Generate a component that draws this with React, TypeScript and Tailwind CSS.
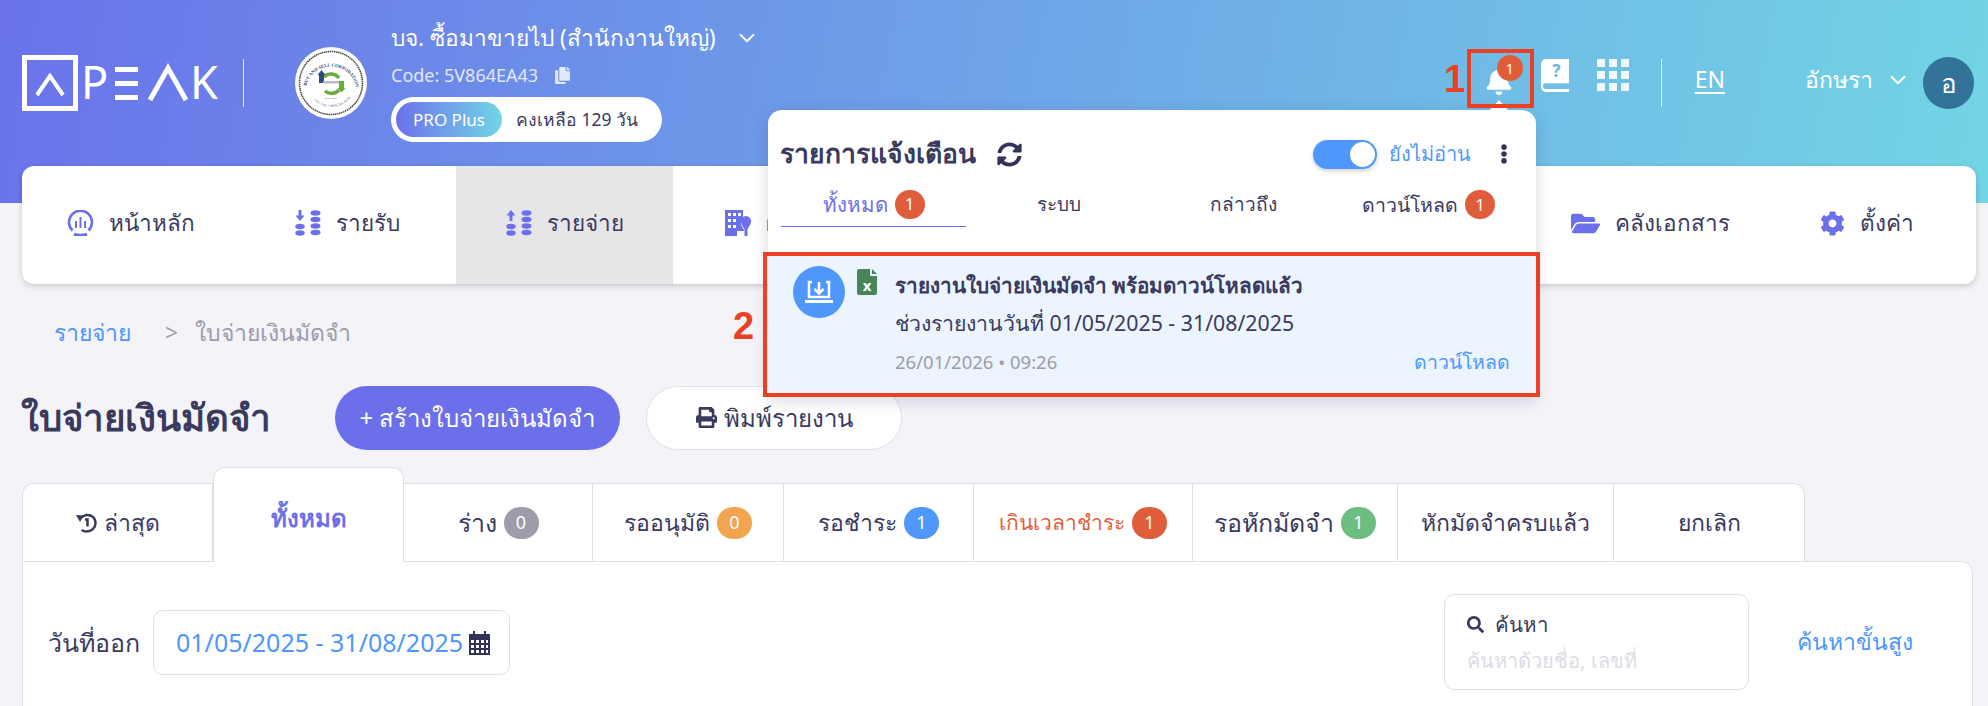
import React from 'react';
import { FaBell, FaCog, FaCopy, FaEllipsisV, FaFolderOpen, FaPrint, FaSearch, FaSyncAlt } from 'react-icons/fa';
import { ChevronDown } from 'lucide-react';

const PeakLogo = () => (
  <svg width="197" height="56" viewBox="0 0 197 56" aria-label="PEAK" className="overflow-visible">
    <rect x="2.500" y="2.500" width="51" height="51" fill="none" stroke="#fff" strokeWidth="5" />
    <polyline points="15,40 28,21 41,40" fill="none" stroke="#fff" strokeWidth="4" />
    <text x="59" y="44" fill="#fff" fontSize="45" fontFamily="Noto Sans, sans-serif">P</text>
    <rect x="93" y="12" width="23" height="5" fill="#fff" />
    <rect x="93" y="26" width="23" height="5" fill="#fff" />
    <rect x="93" y="40" width="23" height="5" fill="#fff" />
    <polyline points="128,45 146,13 164,45" fill="none" stroke="#fff" strokeWidth="5" />
    <text x="168" y="44" fill="#fff" fontSize="45" fontFamily="Noto Sans, sans-serif">K</text>
  </svg>
);

const CompanyLogo = () => (
  <svg width="72" height="72" viewBox="0 0 72 72">
    <circle cx="36" cy="36" r="36" fill="#fff" />
    <circle cx="36" cy="36" r="31.500" fill="#fff" stroke="#444" strokeWidth="1.500" strokeDasharray="1.500 0.600" />
    <defs>
      <path id="sealTop" d="M11 40a25.500 25.500 0 0 1 50 0" />
      <path id="sealBottom" d="M14 47a25 25 0 0 0 44 0" />
    </defs>
    <text fontSize="4.600" fontWeight="700" fill="#2c4a80" fontFamily="Liberation Serif, serif">
      <textPath href="#sealTop" startOffset="1">BUY AND SELL CORPORATION</textPath>
    </text>
    <text fontSize="3.400" fill="#666" fontFamily="Liberation Serif, serif">
      <textPath href="#sealBottom" startOffset="8">EST. 2021 • OFFICIAL SEAL</textPath>
    </text>
    <path d="M29 30a10 10 0 0 1 15 1" fill="none" stroke="#68ad3e" strokeWidth="3.500" />
    <path d="M44 43a10 10 0 0 1-14 1" fill="none" stroke="#68ad3e" strokeWidth="3.500" />
    <rect x="24" y="27" width="5" height="9" fill="#2c4a80" />
    <path d="M22.500 28l4-5 4 5z" fill="#2c4a80" />
    <rect x="44" y="34" width="5" height="7" fill="#68ad3e" />
    <path d="M42.500 41h8l-4 4.500z" fill="#68ad3e" />
    <rect x="28" y="34" width="16" height="2.500" fill="#b9bcc4" />
    <text x="36" y="52" textAnchor="middle" fontSize="2.500" fill="#777" fontFamily="Liberation Sans, sans-serif">EST. 2021</text>
  </svg>
);

const CoinsIcon = ({ up }: { up?: boolean }) => (
  <svg width="26" height="26" viewBox="0 0 26 26" fill="#6c6fea">
    {up ? <path d="M5 0l4.500 5.500H6.500V11h-3V5.500H.500z" /> : <path d="M5 11L.500 5.500h3V0h3v5.500h3z" />}
    <ellipse cx="5" cy="16.500" rx="4.700" ry="2.800" />
    <ellipse cx="5" cy="23" rx="4.700" ry="2.800" />
    <ellipse cx="20.500" cy="3" rx="5" ry="2.800" />
    <ellipse cx="20.500" cy="9.500" rx="5" ry="2.800" />
    <ellipse cx="20.500" cy="16" rx="5" ry="2.800" />
    <ellipse cx="20.500" cy="22.500" rx="5" ry="2.800" />
  </svg>
);

// the three middle menu items sit fully behind the notification popover
const navItems: { label: string; icon: React.ReactNode; active?: boolean }[] = [
  {
    label: 'หน้าหลัก',
    icon: (
      <svg width="27" height="26" viewBox="0 0 27 26" fill="none" stroke="#6c6fea" strokeWidth="2.500">
        <path d="M5.500 20.500a11.500 11.500 0 1 1 16 0" />
        <path d="M7 24.200c4 1.300 9 1.300 13 0" strokeWidth="3" />
        <path d="M9 11v7M13.500 7v11M18 11v7" strokeWidth="2" />
      </svg>
    ),
  },
  { label: 'รายรับ', icon: <CoinsIcon /> },
  { label: 'รายจ่าย', icon: <CoinsIcon up />, active: true },
  {
    label: 'ผู้ติดต่อ',
    icon: (
      <svg width="26" height="26" viewBox="0 0 26 26" fill="#6c6fea">
        <path fillRule="evenodd" d="M0 0h18v8a7 7 0 0 0-2 5c0 3 2 5 3 7v1h-7v5H0zM3 3v3h3V3zM8 3v3h3V3zM13 3v3h3V3zM3 9v3h3V9zM8 9v3h3V9zM3 15v3h3v-3zM8 15v3h3v-3z" />
        <path d="M21 6a5 5 0 0 1 5 5.500c0 3-3 6.500-3.500 8V25a1.500 1.500 0 0 1-3 0v-5.500c-.5-1.500-3.500-5-3.500-8A5 5 0 0 1 21 6z" />
      </svg>
    ),
  },
  { label: '', icon: null },
  { label: '', icon: null },
  { label: '', icon: null },
  { label: 'คลังเอกสาร', icon: <FaFolderOpen className="text-[#6c6fea]" size={29} /> },
  { label: 'ตั้งค่า', icon: <FaCog className="text-[#6c6fea]" size={25} /> },
];

const tabs: { label: string; width: string; count?: string; badge?: string; labelClass?: string }[] = [
  { label: 'ร่าง', width: 'w-[189px]', count: '0', badge: 'bg-[#9c9cab]', labelClass: 'text-[25px]' },
  { label: 'รออนุมัติ', width: 'w-[191px]', count: '0', badge: 'bg-[#f2a44f]' },
  { label: 'รอชำระ', width: 'w-[190px]', count: '1', badge: 'bg-[#4f97fa]' },
  { label: 'เกินเวลาชำระ', width: 'w-[219px]', count: '1', badge: 'bg-[#e05d3c]', labelClass: 'text-[#e05d3c] text-[21px]' },
  { label: 'รอหักมัดจำ', width: 'w-[205px]', count: '1', badge: 'bg-[#6cbd80]', labelClass: 'text-[25px]' },
  { label: 'หักมัดจำครบแล้ว', width: 'w-[216px]' },
  { label: 'ยกเลิก', width: 'w-[191px]' },
];

const CountBadge = () => (
  <span className="inline-flex items-center justify-center w-[30px] h-[29px] rounded-full bg-[#e05d3c] text-white text-[17px]">1</span>
);

const NotificationPopover = () => (
  <div className="absolute left-[768px] top-[110px] w-[768px] h-[287px] bg-white rounded-t-[14px] shadow-[0_4px_16px_rgba(50,50,93,0.18)] text-[#3a3a5e]">
    <span className="absolute right-[28px] -top-[10px] w-0 h-0 border-x-[9px] border-x-transparent border-b-[10px] border-b-white" />
    <div className="flex items-center h-[58px] pt-[30px] pl-[12px] pr-[22px]">
      <span className="text-[26.500px] font-semibold">รายการแจ้งเตือน</span>
      <FaSyncAlt className="ml-[21px] text-[#33335a]" size={25} />
      <span className="ml-auto flex items-center justify-end w-[64px] h-[29px] rounded-full bg-[#4f97fa] pr-[2px] shadow-[0_2px_4px_rgba(0,0,0,0.2)]">
        <span className="w-[25px] h-[25px] rounded-full bg-white" />
      </span>
      <span className="ml-[12px] text-[20px] text-[#4f97fa]">ยังไม่อ่าน</span>
      <FaEllipsisV className="ml-[23px] text-[#33335a]" size={20} />
    </div>
    <div className="flex mt-[14px] pl-[13px] h-[55px] text-[19px]">
      <div className="w-[185px] h-[45px] flex items-center justify-center gap-[7px] border-b border-[#6c6fea] text-[#6c6fea]">
        <span className="text-[20.500px]">ทั้งหมด</span> <CountBadge />
      </div>
      <div className="w-[185px] h-[45px] flex items-center justify-center">ระบบ</div>
      <div className="w-[185px] h-[45px] flex items-center justify-center">กล่าวถึง</div>
      <div className="w-[185px] h-[45px] flex items-center justify-center gap-[7px]">
        <span className="text-[19.500px]">ดาวน์โหลด</span> <CountBadge />
      </div>
    </div>
    <div className="flex h-[145px] mt-[15px] bg-[#ecf4fe] pl-[25px] pr-[26px] pt-[14px]">
      <span className="flex items-center justify-center w-[52px] h-[52px] rounded-full bg-[#4f97fa] shrink-0">
        <svg width="30" height="26" viewBox="0 0 30 26" fill="none" stroke="#fff" strokeWidth="2.500">
          <path d="M8 3H5v15h20V3h-3" />
          <path d="M15 3v11M10.500 10l4.500 4.500 4.500-4.500" />
          <path d="M1 22.500h28" strokeWidth="3" />
        </svg>
      </span>
      <svg className="ml-[12px] mt-[3px] shrink-0" width="20" height="26" viewBox="0 0 20 26">
        <path d="M2 0h11v7h7v17a2 2 0 0 1-2 2H2a2 2 0 0 1-2-2V2a2 2 0 0 1 2-2z" fill="#4a8557" />
        <path d="M15 0l5 5h-5z" fill="#4a8557" />
        <text x="10" y="22" textAnchor="middle" fontSize="15" fontWeight="700" fill="#fff" fontFamily="Noto Sans, sans-serif">x</text>
      </svg>
      <div className="ml-[18px] flex-1">
        <div className="text-[20.700px] font-semibold leading-[38px]">รายงานใบจ่ายเงินมัดจำ พร้อมดาวน์โหลดแล้ว</div>
        <div className="text-[21.300px] leading-[32px] mt-[3px]">ช่วงรายงานวันที่ 01/05/2025 - 31/08/2025</div>
        <div className="flex items-center justify-between mt-[8px] h-[30px]">
          <span className="text-[18.500px] text-[#9c9cab]">26/01/2026 • 09:26</span>
          <span className="text-[19.500px] text-[#4f97fa]">ดาวน์โหลด</span>
        </div>
      </div>
    </div>
  </div>
);

export default function App() {
  return (
    <div className="relative w-[1988px] h-[706px] overflow-hidden bg-[#f3f3f8] font-['Noto_Sans',sans-serif] text-[#3a3a5e]">
      <div className="bg-[linear-gradient(100deg,#6a73ea,#72d5e5)] h-[203px] pl-[22px] pr-[12px]">
        <header className="flex items-center h-[166px] pr-[2px] text-white">
          <PeakLogo />
          <span className="ml-[24px] w-px h-[48px] bg-white/80" />
          <span className="ml-[51px]"><CompanyLogo /></span>
          <div className="ml-[24px] -mt-[2px]">
            <div className="flex items-center text-[22.700px] leading-[32px]">
              บจ. ซื้อมาขายไป (สำนักงานใหญ่)
              <ChevronDown className="ml-[18px]" size={26} strokeWidth={1.800} />
            </div>
            <div className="flex items-center mt-[10px] text-[18px] leading-[22px] text-white/80">
              Code: 5V864EA43
              <FaCopy className="ml-[16px]" size={17} />
            </div>
            <div className="mt-[11px] flex items-center w-[271px] h-[45px] rounded-full bg-white p-[5px] text-[#3a3a5e] text-[17px]">
              <span className="flex items-center justify-center w-[106px] h-[35px] rounded-full bg-linear-to-r from-[#6c6fea] to-[#72d5e5] text-white">PRO Plus</span>
              <span className="ml-[14px] text-[17.500px]">คงเหลือ 129 วัน</span>
            </div>
          </div>
          <div className="ml-auto flex items-center h-[52px]">
            <span className="relative -mt-[4px]">
              <FaBell size={28} />
              <span className="absolute left-[12px] -top-[12px] flex items-center justify-center w-[26px] h-[26px] rounded-full bg-[#e05d3c] text-[14px]">1</span>
            </span>
            <svg className="ml-[28px] -mt-[16px]" width="28" height="33" viewBox="0 0 29 34" fill="#fff">
              <path fillRule="evenodd" d="M5 0h24v25H5a3 3 0 0 0 0 6h24v3H5a5 5 0 0 1-5-5V5a5 5 0 0 1 5-5z" />
              <text x="16" y="19" textAnchor="middle" fontSize="18" fontWeight="700" fill="#6eb8e6" fontFamily="Noto Sans, sans-serif">?</text>
            </svg>
            <div className="ml-[28px] -mt-[16px] grid grid-cols-3 gap-[4px]">
              {Array.from({ length: 9 }).map((_, i) => (
                <span key={i} className="w-[8px] h-[8px] bg-white/90" />
              ))}
            </div>
            <span className="ml-[32px] w-px h-[48px] bg-white/80" />
            <span className="ml-[33px] -mt-[8px] text-[23px] underline underline-offset-4">EN</span>
            <span className="ml-[80px] -mt-[8px] text-[23px]">อักษรา</span>
            <ChevronDown className="ml-[12px] -mt-[6px]" size={26} strokeWidth={1.800} />
            <span className="ml-[12px] flex items-center justify-center w-[51px] h-[52px] rounded-full bg-[#347399] text-[26px]">อ</span>
          </div>
        </header>
        <nav className="flex h-[118px] rounded-[12px] bg-white shadow-[0_2px_6px_rgba(0,0,0,0.18)] overflow-hidden">
          {navItems.map((item, i) => (
            <div
              key={i}
              className={`flex flex-1 items-center justify-center gap-[15px] text-[22.500px] pb-[4px] ${item.active ? 'bg-[#e6e6e8]' : ''}`}
            >
              {item.icon}
              <span>{item.label}</span>
            </div>
          ))}
        </nav>
      </div>

      <main className="px-[22px] pt-[81px]">
        <div className="h-[101px] pt-[32px] pl-[32px] flex items-start text-[23px] leading-[32px]">
          <span className="text-[#4f97fa]">รายจ่าย</span>
          <span className="ml-[34px] text-[#9c9cab]">&gt;</span>
          <span className="ml-[17px] text-[#9c9cab]">ใบจ่ายเงินมัดจำ</span>
        </div>
        <div className="flex items-center h-[65px]">
          <h1 className="w-[249px] text-[36.700px] font-semibold -ml-[1px] whitespace-nowrap">ใบจ่ายเงินมัดจำ</h1>
          <button className="ml-[65px] w-[285px] h-[64px] rounded-full bg-[#6c6fea] text-white text-[24px]">+ สร้างใบจ่ายเงินมัดจำ</button>
          <button className="ml-[26px] w-[256px] h-[64px] rounded-full bg-white border border-[#dfdfe9] text-[24px] flex items-center justify-center gap-[7px]">
            <FaPrint size={21} /> พิมพ์รายงาน
          </button>
        </div>

        <div className="flex items-end mt-[17px] relative z-10 text-[23px]">
          <div className="w-[191px] h-[78px] flex items-center justify-center gap-[6px] bg-white border border-b-0 border-[#dfdfe9] rounded-tl-[12px]">
            <svg width="22" height="20" viewBox="0 0 22 20" fill="none" stroke="#3a3a5e" strokeWidth="2.500">
              <path d="M5 5a9 9 0 0 1 5.500-3c5-.5 9 3 9 8s-4 8.500-9 8.500c-2 0-3.500-.5-5-1.500" />
              <path d="M0 2l7.500.5L4 9z" fill="#3a3a5e" stroke="none" />
              <path d="M9 6.500h2.500v7" />
            </svg>
            ล่าสุด
          </div>
          <div className="w-[191px] h-[95px] pt-[32px] -mb-px flex justify-center bg-white border border-b-0 border-[#dfdfe9] rounded-t-[12px] text-[#6c6fea] text-[24px] font-semibold">
            ทั้งหมด
          </div>
          {tabs.map((tab, i) => (
            <div
              key={tab.label}
              className={`${tab.width} h-[78px] flex items-center justify-center gap-[7px] bg-white border-t border-r border-[#dfdfe9] ${i === tabs.length - 1 ? 'rounded-tr-[12px]' : ''} ${tab.labelClass ?? ''}`}
            >
              {tab.label}
              {tab.count && (
                <span className={`flex items-center justify-center w-[35px] h-[32px] rounded-full text-white text-[18px] ${tab.badge}`}>{tab.count}</span>
              )}
            </div>
          ))}
        </div>

        <section className="flex items-start h-[200px] w-[1951px] bg-white border border-[#dfdfe9] rounded-tr-[12px] pl-[25px]">
          <div className="flex items-center mt-[48px]">
            <span className="w-[105px] text-[25px] font-medium">วันที่ออก</span>
            <div className="flex items-center w-[357px] h-[65px] rounded-[10px] border border-[#dfdfe9] pl-[22px] text-[25px] text-[#4f97fa]">
              01/05/2025 - 31/08/2025
              <svg className="ml-[6px]" width="21" height="24" viewBox="0 0 21 24" fill="#33335a">
                <path fillRule="evenodd" d="M0 3h4V0h2v3h9V0h2v3h4v21H0zM2 9v3h3V9zM7 9v3h3V9zM12 9v3h3V9zM17 9v3h2V9zM2 14v3h3v-3zM7 14v3h3v-3zM12 14v3h3v-3zM17 14v3h2v-3zM2 19v3h3v-3zM7 19v3h3v-3zM12 19v3h3v-3zM17 19v3h2v-3z" />
              </svg>
            </div>
          </div>
          <div className="ml-auto mt-[32px] w-[305px] h-[96px] rounded-[10px] border border-[#dfdfe9] pl-[22px] pt-[14px]">
            <div className="flex items-center gap-[11px] text-[20.500px] font-medium leading-[30px]">
              <FaSearch size={17} /> ค้นหา
            </div>
            <div className="mt-[8px] text-[20px] leading-[28px] text-[#dcdce6]">ค้นหาด้วยชื่อ, เลขที่</div>
          </div>
          <span className="ml-[48px] mr-[59px] mt-[62px] text-[23px] text-[#4f97fa]">ค้นหาขั้นสูง</span>
        </section>
      </main>

      <NotificationPopover />

      {/* annotations on top of the screenshot */}
      <div className="absolute left-[1467px] top-[49px] w-[67px] h-[59px] border-4 border-[#ea4125]" />
      <div className="absolute left-[763px] top-[252px] w-[777px] h-[145px] border-4 border-[#ea4125]" />
      <span className="absolute left-[1444px] top-[57px] text-[38px] leading-[44px] font-bold text-[#ea4125] font-['Liberation_Sans',sans-serif]">1</span>
      <span className="absolute left-[733px] top-[304px] text-[38px] leading-[44px] font-bold text-[#ea4125] font-['Liberation_Sans',sans-serif]">2</span>
    </div>
  );
}
